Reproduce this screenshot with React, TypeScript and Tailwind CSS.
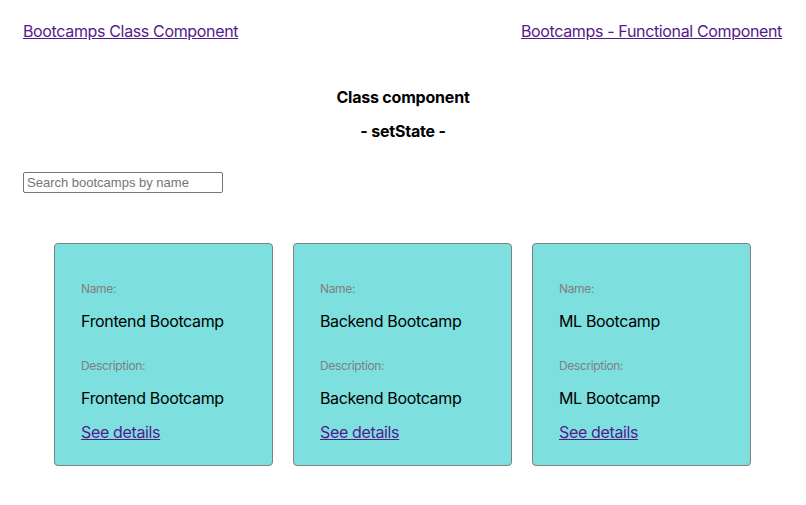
import React, { useState } from "react";

type Bootcamp = {
  id: number;
  name: string;
  description: string;
};

const BOOTCAMPS: Bootcamp[] = [
  { id: 1, name: "Frontend Bootcamp", description: "Frontend Bootcamp" },
  { id: 2, name: "Backend Bootcamp", description: "Backend Bootcamp" },
  { id: 3, name: "ML Bootcamp", description: "ML Bootcamp" },
];

function BootcampCard({ bootcamp }: { bootcamp: Bootcamp }) {
  return (
    <div className="flex w-[219px] h-[223px] flex-col rounded-[4px] border border-[#808080] bg-[#7ddfde] px-[26px] pt-[37px]">
      <p className="text-[12px] leading-[15px] text-[#808080]">Name:</p>
      <p className="mt-[16px] text-base leading-[19px] text-black">{bootcamp.name}</p>
      <p className="mt-[27px] text-[12px] leading-[15px] text-[#808080]">Description:</p>
      <p className="mt-[16px] text-base leading-[19px] text-black">{bootcamp.description}</p>
      <a href="#" className="mt-[15px] self-start text-base leading-[19px] text-[#551a8b] underline">
        See details
      </a>
    </div>
  );
}

export default function App() {
  const [query, setQuery] = useState("");
  const filtered = BOOTCAMPS.filter((b) => b.name.toLowerCase().includes(query.toLowerCase()));

  return (
    <div className="min-h-[505px] bg-white font-['Inter',sans-serif] tracking-[-0.35px] text-black">
      <nav className="flex justify-between px-[23px] pt-[22px] text-base leading-[19px]">
        <a href="#" className="text-[#551a8b] underline">
          Bootcamps Class Component
        </a>
        <a href="#" className="mr-[1px] text-[#551a8b] underline">
          Bootcamps - Functional Component
        </a>
      </nav>

      <h1 className="mt-[47px] text-center text-base font-bold leading-[19px] tracking-[-0.2px]">Class component</h1>
      <h2 className="mt-[15px] text-center text-base font-bold leading-[19px] tracking-[-0.2px]">- setState -</h2>

      <div className="mt-[31px] px-[23px]">
        <input
          value={query}
          onChange={(e) => setQuery(e.target.value)}
          placeholder="Search bootcamps by name"
          className="block h-[21px] w-[200px] rounded-[2px] border border-[#767676] px-[3px] font-['Liberation_Sans',sans-serif] text-[13px] tracking-normal placeholder:text-[#757575] outline-none"
        />
      </div>

      <div className="mt-[50px] flex justify-center gap-[20px] pr-[1px]">
        {filtered.map((b) => (
          <BootcampCard key={b.id} bootcamp={b} />
        ))}
      </div>
    </div>
  );
}
